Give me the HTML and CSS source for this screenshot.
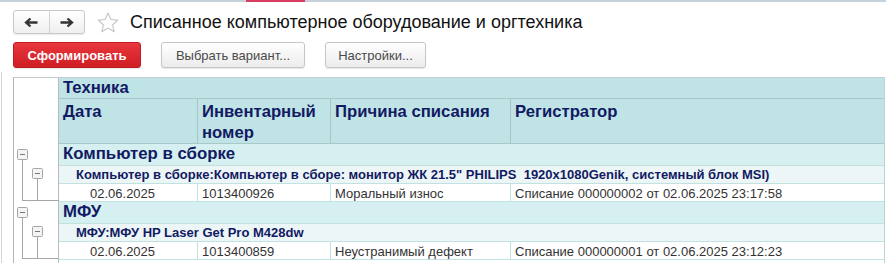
FILE: index.html
```html
<!DOCTYPE html>
<html lang="ru">
<head>
    <meta charset="UTF-8">
    <title>Списанное компьютерное оборудование и оргтехника</title>
    <link rel="stylesheet" href="styles.css">
</head>
<body>

<div class="topline"><span></span></div>

<div class="toolbar">
    <div class="nav">
        <button class="nav-button">
            <svg width="14" height="11" viewBox="0 0 14 11"><path d="M13.5 5.5H3M6.5 1.5L2 5.5l4.5 4" fill="none" stroke="#333" stroke-width="2.3"/></svg>
        </button>
        <button class="nav-button">
            <svg width="14" height="11" viewBox="0 0 14 11"><path d="M0.5 5.5H11M7.5 1.5L12 5.5l-4.5 4" fill="none" stroke="#333" stroke-width="2.3"/></svg>
        </button>
    </div>
    <svg class="star" width="22" height="21" viewBox="0 0 22 21">
        <path d="M11 1.2l2.9 6.3 6.8.7-5.1 4.6 1.5 6.8L11 16.1l-6.1 3.5 1.5-6.8L1.3 8.2l6.8-.7z" fill="#fff" stroke="#c4c4c4" stroke-width="1.1"/>
    </svg>
    <h1 class="title">Списанное компьютерное оборудование и оргтехника</h1>
</div>

<div class="commands">
    <button class="btn btn-primary">Сформировать</button>
    <button class="btn btn-wide">Выбрать вариант...</button>
    <button class="btn">Настройки...</button>
</div>

<div class="report">
    <div class="sheet">
        <table class="grid">
            <colgroup>
                <col class="col-tree">
                <col class="col-date">
                <col class="col-num">
                <col class="col-reason">
                <col>
            </colgroup>
            <tr class="head-title">
                <td class="tree" rowspan="2"></td>
                <td colspan="4">Техника</td>
            </tr>
            <tr class="head-cols">
                <td>Дата</td>
                <td>Инвентарный номер</td>
                <td>Причина списания</td>
                <td>Регистратор</td>
            </tr>

            <!-- Компьютер в сборке -->
            <tr class="group">
                <td class="tree">
                    <svg width="45" height="22"><rect x="3.5" y="5.5" width="10" height="10" rx="1" fill="#f4f4f4" stroke="#a6a6a6"/><path d="M6 10.5h5" stroke="#777"/><path d="M8.5 15.5V22" stroke="#a6a6a6"/></svg>
                </td>
                <td colspan="4">Компьютер в сборке</td>
            </tr>
            <tr class="subgroup">
                <td class="tree">
                    <svg width="45" height="18"><path d="M8.5 0V18" stroke="#a6a6a6"/><rect x="18.5" y="2.5" width="10" height="10" rx="1" fill="#f4f4f4" stroke="#a6a6a6"/><path d="M21 7.5h5" stroke="#777"/><path d="M23.5 12.5V18" stroke="#a6a6a6"/></svg>
                </td>
                <td colspan="4">Компьютер в сборке:Компьютер в сборе: монитор ЖК 21.5" PHILIPS&nbsp; 1920x1080Genik, системный блок MSI)</td>
            </tr>
            <tr class="detail">
                <td class="tree">
                    <svg width="45" height="18"><path d="M8.5 0V16.5M23.5 0V16.5M8 16.5H45" fill="none" stroke="#a6a6a6"/></svg>
                </td>
                <td class="date">02.06.2025</td>
                <td>1013400926</td>
                <td>Моральный износ</td>
                <td>Списание 000000002 от 02.06.2025 23:17:58</td>
            </tr>

            <!-- МФУ -->
            <tr class="group">
                <td class="tree">
                    <svg width="45" height="22"><rect x="3.5" y="5.5" width="10" height="10" rx="1" fill="#f4f4f4" stroke="#a6a6a6"/><path d="M6 10.5h5" stroke="#777"/><path d="M8.5 15.5V22" stroke="#a6a6a6"/></svg>
                </td>
                <td colspan="4">МФУ</td>
            </tr>
            <tr class="subgroup">
                <td class="tree">
                    <svg width="45" height="18"><path d="M8.5 0V18" stroke="#a6a6a6"/><rect x="18.5" y="2.5" width="10" height="10" rx="1" fill="#f4f4f4" stroke="#a6a6a6"/><path d="M21 7.5h5" stroke="#777"/><path d="M23.5 12.5V18" stroke="#a6a6a6"/></svg>
                </td>
                <td colspan="4">МФУ:МФУ HP Laser Get Pro M428dw</td>
            </tr>
            <tr class="detail">
                <td class="tree">
                    <svg width="45" height="18"><path d="M8.5 0V16.5M23.5 0V16.5M8 16.5H45" fill="none" stroke="#a6a6a6"/></svg>
                </td>
                <td class="date">02.06.2025</td>
                <td>1013400859</td>
                <td>Неустранимый дефект</td>
                <td>Списание 000000001 от 02.06.2025 23:12:23</td>
            </tr>
            <tr class="filler">
                <td class="tree"></td>
                <td colspan="4"></td>
            </tr>
        </table>
    </div>
</div>

</body>
</html>
```

FILE: styles.css
```css
body {
    margin: 0;
    font-family: "Liberation Sans", Arial, sans-serif;
    background-color: #fff;
    color: #333;
}

.topline {
    display: flex;
    height: 2px;
    background-color: #c5d2dc;
}

.topline span {
    margin-left: 246px;
    width: 59px;
    background-color: #d83c5e;
}

/* window header */
.toolbar {
    display: flex;
    align-items: center;
    padding: 8px 13px 0;
    height: 24px;
}

.nav {
    display: flex;
    width: 72px;
    height: 24px;
    box-sizing: border-box;
    border: 1px solid #c8c8c8;
    border-radius: 3px;
    background: linear-gradient(#fff, #efefef);
    box-shadow: 0 1px 1px rgba(0, 0, 0, 0.08);
}

.nav-button {
    flex: 1;
    display: flex;
    align-items: center;
    justify-content: center;
    padding: 0;
    border: none;
    background: none;
}

.nav-button + .nav-button {
    border-left: 1px solid #d2d2d2;
}

.star {
    margin-left: 12px;
}

.title {
    margin: 0 0 0 11px;
    font-size: 18px;
    font-weight: normal;
    color: #111;
    white-space: nowrap;
}

/* command bar */
.commands {
    display: flex;
    gap: 20px;
    padding: 8px 13px 0;
}

.btn {
    height: 26px;
    width: 101px;
    padding: 0;
    border: 1px solid #c6c6c6;
    border-radius: 3px;
    background: linear-gradient(#fff, #ececec);
    box-shadow: 0 1px 1px rgba(0, 0, 0, 0.1);
    font-family: inherit;
    font-size: 13px;
    color: #4a4a4a;
}

.btn-wide {
    width: 144px;
}

.btn-primary {
    width: 128px;
    border-color: #be1d24;
    background: linear-gradient(#e9373e, #cf1d24);
    color: #fff;
    font-weight: bold;
}

/* report */
.report {
    margin: 4px 0 0 1px;
    padding: 5px 0 0 11px;
    border-left: 1px solid #d4d4d4;
}

.sheet {
    width: 872px;
    height: 190px;
    box-sizing: border-box;
    border-top: 1px solid #c4cccc;
    border-left: 1px solid #b4b4b4;
    border-right: 1px solid #b9d4d4;
    overflow: hidden;
}

.grid {
    width: 100%;
    table-layout: fixed;
    border-collapse: separate;
    border-spacing: 0;
    font-size: 13px;
}

.col-tree { width: 45px; }
.col-date { width: 139px; }
.col-num { width: 133px; }
.col-reason { width: 180px; }

.grid td {
    box-sizing: border-box;
    padding: 0 4px;
    white-space: nowrap;
    overflow: visible;
    vertical-align: top;
    line-height: 1;
}

.grid td.tree {
    padding: 0;
    background-color: #fff;
    border-right: 1px solid #b4bcbc;
    border-bottom: none;
}

.tree svg {
    display: block;
}

.head-title td,
.head-cols td {
    background-color: #c0e3e5;
    color: #111a63;
    font-weight: bold;
    font-size: 16.7px;
}

.head-title td {
    height: 21px;
    padding-top: 2px;
    border-bottom: 1px solid #a9c8c9;
}

.head-cols td {
    height: 44px;
    padding-top: 2px;
    white-space: normal;
    line-height: 21px;
    border-right: 1px solid #a9c4c4;
    border-bottom: 1px solid #a9c8c9;
}

.head-cols td:last-child {
    border-right: none;
}

.group td {
    height: 22px;
    background-color: #d6eff0;
    color: #111a63;
    font-weight: bold;
    font-size: 16.8px;
    padding-top: 2px;
    border-bottom: 1px solid #c2e2e2;
}

.subgroup td {
    height: 18px;
    background-color: #edf6f6;
    color: #111a63;
    font-weight: bold;
    font-size: 13px;
    padding-top: 2px;
    padding-left: 17px;
    border-bottom: 1px solid #c2e2e2;
}

.detail td {
    height: 18px;
    padding-top: 3px;
    border-right: 1px solid #c2e2e2;
    border-bottom: 1px solid #c2e2e2;
}

.detail td:last-child {
    border-right: none;
}

.detail td.date {
    padding-left: 31px;
}

.filler td {
    height: 30px;
    background-color: #fff;
}
```
